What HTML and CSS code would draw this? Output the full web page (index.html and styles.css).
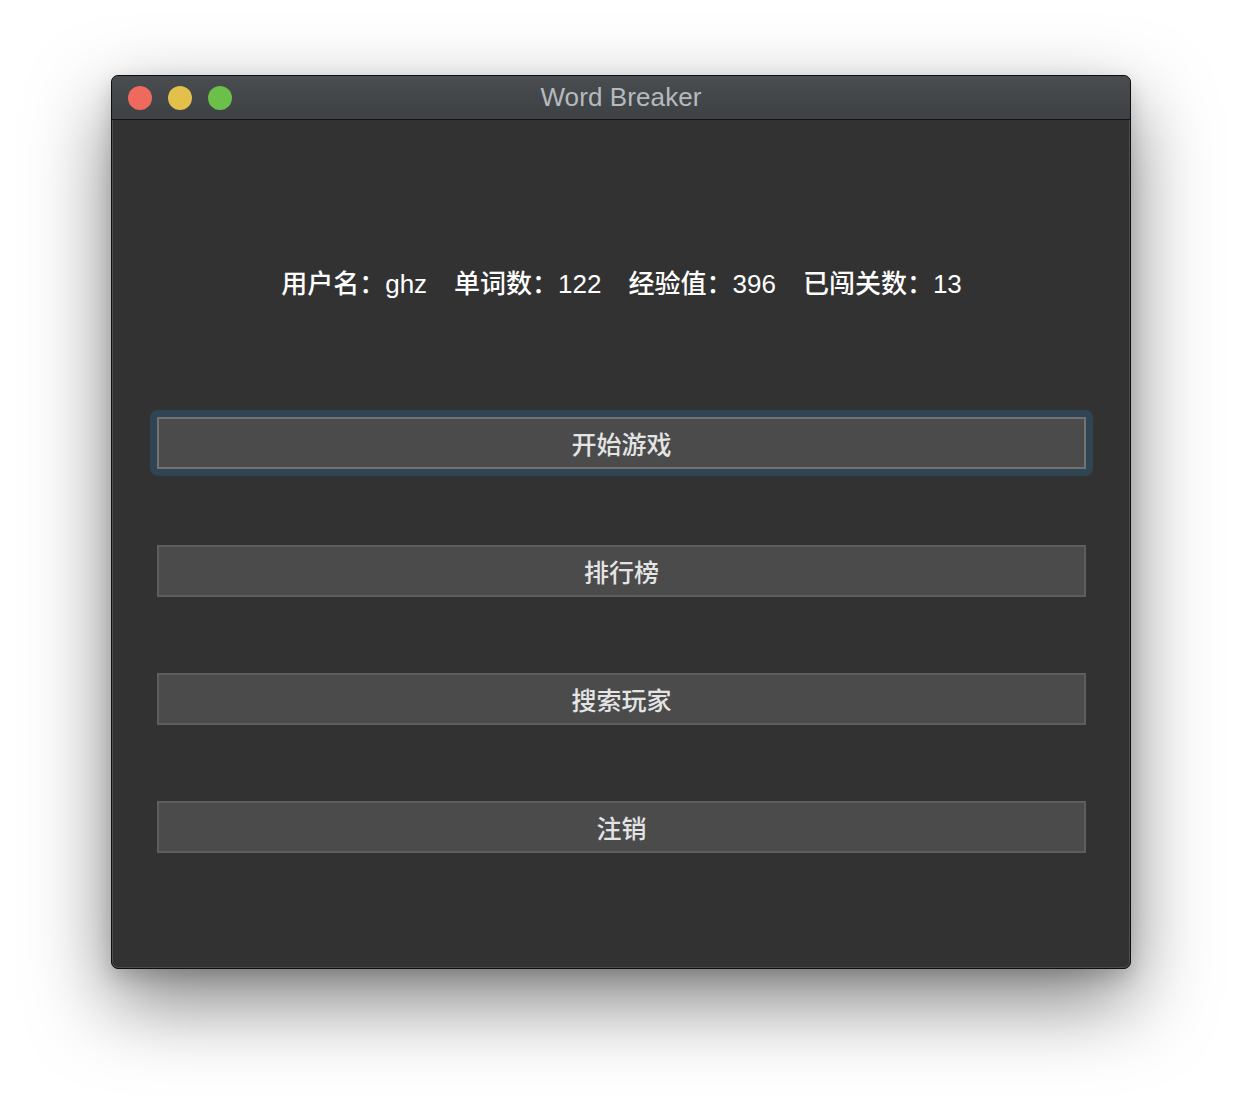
FILE: index.html
```html
<!DOCTYPE html>
<html lang="zh">
<head>
<meta charset="utf-8">
<title>Word Breaker</title>
<link rel="stylesheet" href="styles.css">
</head>
<body>
<div class="window">
  <div class="titlebar">
    <div class="lights">
      <span class="light red"></span>
      <span class="light yellow"></span>
      <span class="light green"></span>
    </div>
    <div class="title">Word Breaker</div>
  </div>
  <div class="content">
    <div class="stats">
      <span>用户名：ghz</span>
      <span>单词数：122</span>
      <span>经验值：396</span>
      <span>已闯关数：13</span>
    </div>
    <div class="buttons">
      <div class="focus-ring"><button class="btn btn-focus">开始游戏</button></div>
      <button class="btn">排行榜</button>
      <button class="btn">搜索玩家</button>
      <button class="btn">注销</button>
    </div>
  </div>
</div>
</body>
</html>
```
FILE: styles.css
```css
html, body {
  margin: 0;
  padding: 0;
  background: #ffffff;
}
body {
  width: 1242px;
  height: 1116px;
  overflow: hidden;
  padding-top: 75px;
  box-sizing: border-box;
  font-family: "Liberation Sans", "Noto Sans CJK SC", sans-serif;
}
.window {
  margin-left: 111px;
  width: 1020px;
  height: 894px;
  box-sizing: border-box;
  background: #323232;
  border: 1px solid #0e0e0e;
  border-radius: 7px;
  box-shadow: 0 32px 80px rgba(0, 0, 0, 0.5), 0 8px 20px rgba(0, 0, 0, 0.15), inset 0 0 0 1px #4e4e4e;
  display: flex;
  flex-direction: column;
  overflow: hidden;
}
.titlebar {
  height: 43px;
  flex: none;
  position: relative;
  display: flex;
  align-items: center;
  justify-content: center;
  background: linear-gradient(#4a4d50, #3e4143);
  border-bottom: 1px solid #141414;
  border-radius: 6px 6px 0 0;
}
.lights {
  position: absolute;
  left: 16px;
  top: 10px;
  display: flex;
  gap: 16px;
}
.light {
  width: 24px;
  height: 24px;
  border-radius: 50%;
  display: block;
}
.red { background: #ef6a5e; }
.yellow { background: #e2c04b; }
.green { background: #6cbf48; }
.title {
  color: #b6babe;
  font-size: 26px;
  letter-spacing: 0.1px;
}
.content {
  flex: 1;
  display: flex;
  flex-direction: column;
  padding: 148px 44px 0 45px;
}
.stats {
  display: flex;
  justify-content: center;
  gap: 27px;
  color: #ffffff;
  font-size: 26px;
  font-weight: 500;
  line-height: 32px;
  height: 32px;
}
.buttons {
  margin-top: 117px;
  display: flex;
  flex-direction: column;
  gap: 76px;
}
.focus-ring {
  margin: -7px;
  padding: 7px;
  border-radius: 8px;
  background: #2f4553;
  display: flex;
}
.btn {
  display: block;
  width: 100%;
  height: 52px;
  margin: 0;
  padding: 0;
  box-sizing: border-box;
  background: #4b4b4b;
  border: 2px solid #5e5e5e;
  color: #e4e4e4;
  font-family: "Noto Sans CJK SC", sans-serif;
  font-size: 25px;
  font-weight: 500;
  line-height: 1;
  text-align: center;
}
.btn-focus {
  border-color: #727272;
}
```
